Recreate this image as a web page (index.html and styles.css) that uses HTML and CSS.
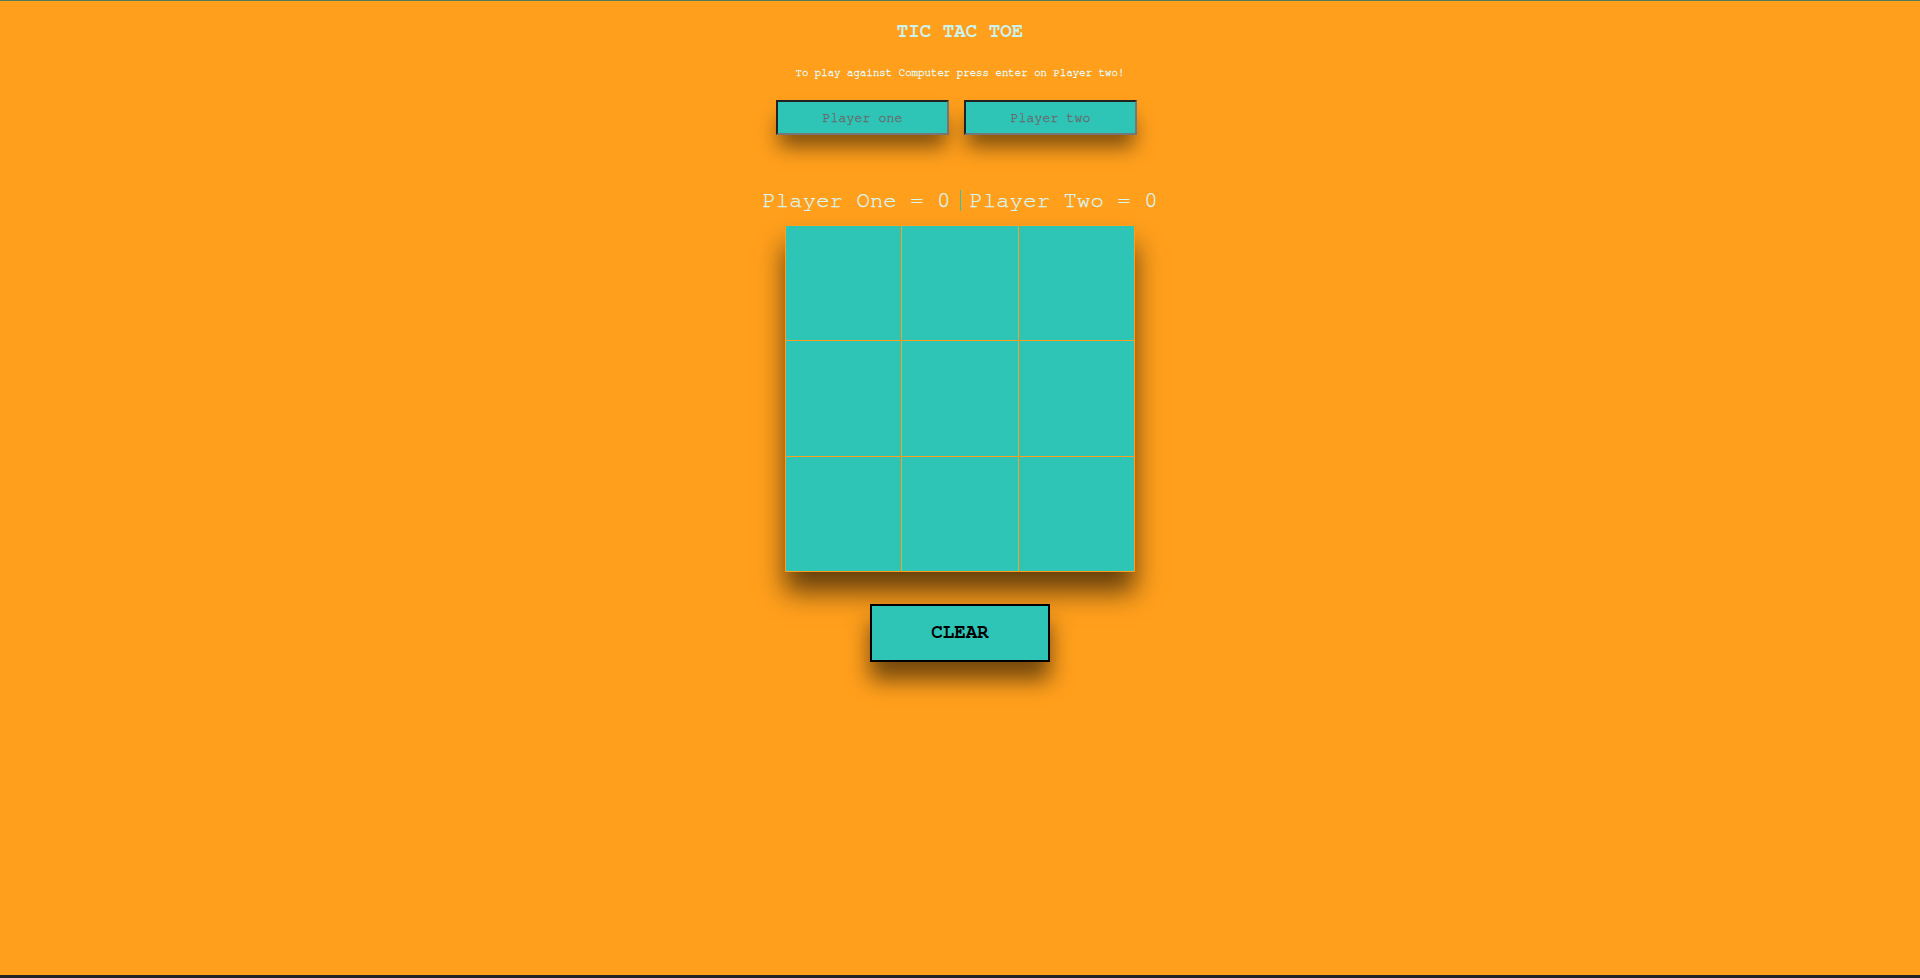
FILE: index.html
```html
<!DOCTYPE html>
<html lang="en">
<head>
<meta charset="utf-8">
<title>Tic Tac Toe</title>
<link rel="stylesheet" href="styles.css">
</head>
<body>
<div class="page">
  <h1 class="title">TIC TAC TOE</h1>
  <p class="hint">To play against Computer press enter on Player two!</p>
  <div class="players">
    <input class="player-input" type="text" placeholder="Player one">
    <input class="player-input" type="text" placeholder="Player two">
  </div>
  <div class="score">
    <span class="score-item">Player One = 0</span>
    <span class="divider"></span>
    <span class="score-item">Player Two = 0</span>
  </div>
  <div class="board">
    <div class="cell"></div>
    <div class="cell"></div>
    <div class="cell"></div>
    <div class="cell"></div>
    <div class="cell"></div>
    <div class="cell"></div>
    <div class="cell"></div>
    <div class="cell"></div>
    <div class="cell"></div>
  </div>
  <button class="clear-btn" type="button">CLEAR</button>
</div>
</body>
</html>
```

FILE: styles.css
```css
html, body {
  margin: 0;
  padding: 0;
}

body {
  background: #FF9F1C;
  font-family: "FreeMono", "Liberation Mono", monospace;
}

.page {
  min-height: 100vh;
  box-sizing: border-box;
  border-top: 1px solid #507d5a;
  border-bottom: 3px solid #232323;
  display: flex;
  flex-direction: column;
  align-items: center;
}

.title {
  margin: 20px 0 0;
  font-size: 19.2px;
  font-weight: bold;
  line-height: 22px;
  color: #CBF3F0;
}

.hint {
  margin: 23px 0 0;
  font-size: 10.75px;
  line-height: 13px;
  color: #e4fbf9;
  -webkit-text-stroke: 0.3px #e4fbf9;
}

.players {
  margin-top: 21px;
  padding-right: 7px;
  display: flex;
  gap: 15px;
}

.player-input {
  width: 173px;
  height: 35px;
  box-sizing: border-box;
  margin: 0;
  padding: 1px 2px;
  border: 2px solid;
  border-color: #222 #767676 #767676 #222;
  background: #2EC4B6;
  font-family: "FreeMono", "Liberation Mono", monospace;
  font-size: 13.333px;
  text-align: center;
  color: #222;
  box-shadow: 0 15px 20px -3px rgba(0, 0, 0, 0.5);
  outline: none;
}

.player-input::placeholder {
  color: #6a6a6a;
  -webkit-text-stroke: 0.3px #6a6a6a;
}

.score {
  margin-top: 52px;
  display: flex;
  align-items: center;
  gap: 9px;
  height: 26px;
  font-size: 22.4px;
  color: #d6f7f4;
  -webkit-text-stroke: 0.25px #d6f7f4;
}

.score-item {
  line-height: 26px;
}

.divider {
  width: 1px;
  height: 21px;
  background: #2EC4B6;
}

.board {
  margin-top: 12px;
  width: 350px;
  height: 347px;
  box-sizing: border-box;
  padding: 1px;
  display: grid;
  grid-template-columns: repeat(3, 1fr);
  grid-template-rows: repeat(3, 1fr);
  gap: 1px;
  background: #FF9F1C;
  box-shadow: 0 20px 25px rgba(0, 0, 0, 0.6);
}

.cell {
  background: #2EC4B6;
}

.clear-btn {
  margin-top: 32px;
  width: 180px;
  height: 58px;
  box-sizing: border-box;
  padding: 0 0 2px;
  border: 2px solid #000;
  background: #2EC4B6;
  font-family: "FreeMono", "Liberation Mono", monospace;
  font-size: 19.2px;
  font-weight: bold;
  color: #000;
  box-shadow: 0 18px 22px rgba(0, 0, 0, 0.55);
  cursor: pointer;
}
```
